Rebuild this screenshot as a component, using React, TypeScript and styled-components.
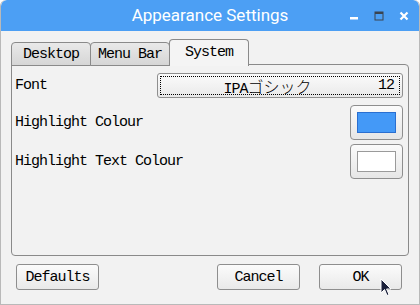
import React from 'react';
import styled, { createGlobalStyle } from 'styled-components';

const GlobalStyle = createGlobalStyle`
  html, body {
    margin: 0;
    padding: 0;
    background: #ffffff;
  }
  * {
    box-sizing: border-box;
  }
`;

const mono = `"Liberation Mono", "Noto Sans CJK JP", monospace`;

const Window = styled.div`
  position: relative;
  width: 420px;
  height: 305px;
  display: flex;
  flex-direction: column;
  background: #f2f2f2;
  border-radius: 6px 6px 0 0;
  border: 1px solid #b9b9b9;
  border-top: none;
  overflow: hidden;
  font-family: ${mono};
  font-size: 15px;
  letter-spacing: -1px;
  color: #000;
`;

const TitleBar = styled.div`
  height: 31px;
  flex: none;
  display: grid;
  grid-template-columns: 1fr auto 1fr;
  align-items: center;
  background: #4c9ff4;
  border-radius: 6px 6px 0 0;
`;

const Title = styled.div`
  grid-column: 2;
  font-family: Roboto, "Noto Sans", sans-serif;
  font-size: 17px;
  letter-spacing: 0;
  color: #ffffff;
  padding-bottom: 1px;
`;

const Controls = styled.div`
  grid-column: 3;
  justify-self: end;
  display: flex;
  align-items: center;
  padding-right: 3px;
`;

const ControlButton = styled.div`
  width: 25px;
  height: 31px;
  display: flex;
  align-items: center;
  justify-content: center;
`;

const Body = styled.div`
  display: flex;
  flex-direction: column;
  padding: 8px 10px 0 10px;
`;

const TabBar = styled.div`
  display: flex;
  align-items: flex-end;
  height: 27px;
  position: relative;
  z-index: 1;
  margin-bottom: -2px;
`;

const Tab = styled.div<{ $active?: boolean }>`
  width: 80px;
  height: ${p => (p.$active ? '27px' : '24px')};
  display: flex;
  align-items: center;
  justify-content: center;
  border: 1px solid #8a8a8a;
  border-bottom: ${p => (p.$active ? 'none' : '1px solid #8a8a8a')};
  border-radius: 4px 4px 0 0;
  margin-left: -1px;
  padding-bottom: ${p => (p.$active ? '2px' : '0')};
  background: ${p =>
    p.$active ? '#f4f4f4' : 'linear-gradient(#e9e9e9, #d6d6d6)'};

  &:first-child {
    margin-left: 0;
  }
`;

const Panel = styled.div`
  height: 192px;
  border: 1px solid #8a8a8a;
  border-radius: 0 4px 4px 4px;
  background: #f2f2f2;
  padding: 8px 5px 0 3px;
  display: flex;
  flex-direction: column;
`;

const Row = styled.div<{ $after?: number }>`
  display: flex;
  align-items: center;
  justify-content: space-between;
  margin-bottom: ${p => p.$after ?? 0}px;
`;

const FontButton = styled.div`
  width: 246px;
  height: 25px;
  border: 1px solid #8e8e8e;
  border-radius: 3px;
  background: linear-gradient(#fbfbfb, #e9e9e9);
  padding: 2px;
`;

const FocusRing = styled.div`
  height: 100%;
  border: 1px dotted #000;
  display: flex;
  align-items: center;
  padding: 0 5px 0 2px;
`;

const FontName = styled.span`
  flex: 1;
  text-align: center;
`;

const Kana = styled.span`
  font-size: 16px;
  letter-spacing: 0;
  font-weight: 300;
`;

const FontSize = styled.span`
  margin-left: 6px;
`;

const SwatchButton = styled.div`
  width: 53px;
  height: 35px;
  border: 1px solid #8e8e8e;
  border-radius: 4px;
  background: linear-gradient(#fbfbfb, #e6e6e6);
  padding: 6px;
`;

const Swatch = styled.div<{ $color: string; $edge: string }>`
  width: 100%;
  height: 100%;
  background: ${p => p.$color};
  border: 1px solid ${p => p.$edge};
`;

const ButtonRow = styled.div`
  display: flex;
  align-items: center;
  padding: 8px 17px 0 15px;
`;

const Button = styled.div`
  width: 83px;
  height: 26px;
  display: flex;
  align-items: center;
  justify-content: center;
  border: 1px solid #8e8e8e;
  border-radius: 3px;
  background: linear-gradient(#fbfbfb, #e9e9e9);
`;

const Spacer = styled.div`
  flex: 1;
`;

const ButtonGap = styled.div`
  width: 19px;
`;

const Cursor = styled.svg`
  position: absolute;
  left: 379px;
  top: 278px;
`;

const App: React.FC = () => {
  return (
    <>
      <GlobalStyle />
      <Window>
        <TitleBar>
          <Title>Appearance Settings</Title>
          <Controls>
            <ControlButton>
              <svg width="10" height="10" viewBox="0 0 10 10">
                <rect x="1" y="6" width="8" height="2.5" fill="#ffffff" />
              </svg>
            </ControlButton>
            <ControlButton>
              <svg width="10" height="10" viewBox="0 0 10 10">
                <rect x="1" y="1" width="8" height="8" fill="none" stroke="#3a4450" strokeWidth="1" />
                <rect x="1" y="1" width="8" height="2" fill="#3a4450" />
              </svg>
            </ControlButton>
            <ControlButton>
              <svg width="10" height="10" viewBox="0 0 10 10">
                <path d="M1.5 1.5 L8.5 8.5 M8.5 1.5 L1.5 8.5" stroke="#ffffff" strokeWidth="2.2" />
              </svg>
            </ControlButton>
          </Controls>
        </TitleBar>

        <Body>
          <TabBar>
            <Tab>Desktop</Tab>
            <Tab>Menu Bar</Tab>
            <Tab $active>System</Tab>
          </TabBar>

          <Panel>
            <Row $after={7}>
              <span>Font</span>
              <FontButton>
                <FocusRing>
                  <FontName>
                    IPA<Kana>ゴシック</Kana>
                  </FontName>
                  <FontSize>12</FontSize>
                </FocusRing>
              </FontButton>
            </Row>
            <Row $after={4}>
              <span>Highlight Colour</span>
              <SwatchButton>
                <Swatch $color="#4499f7" $edge="#2a6fd0" />
              </SwatchButton>
            </Row>
            <Row>
              <span>Highlight Text Colour</span>
              <SwatchButton>
                <Swatch $color="#ffffff" $edge="#9a9a9a" />
              </SwatchButton>
            </Row>
          </Panel>
        </Body>

        <ButtonRow>
          <Button>Defaults</Button>
          <Spacer />
          <Button>Cancel</Button>
          <ButtonGap />
          <Button>OK</Button>
        </ButtonRow>

        <Cursor width="12" height="19" viewBox="0 0 12 19">
          <path
            d="M1 1 L1 15 L4.5 11.5 L7 17.5 L9 16.6 L6.6 11 L11 11 Z"
            fill="#1a1f3a"
            stroke="#ffffff"
            strokeWidth="1"
            strokeLinejoin="round"
          />
        </Cursor>
      </Window>
    </>
  );
};

export default App;
